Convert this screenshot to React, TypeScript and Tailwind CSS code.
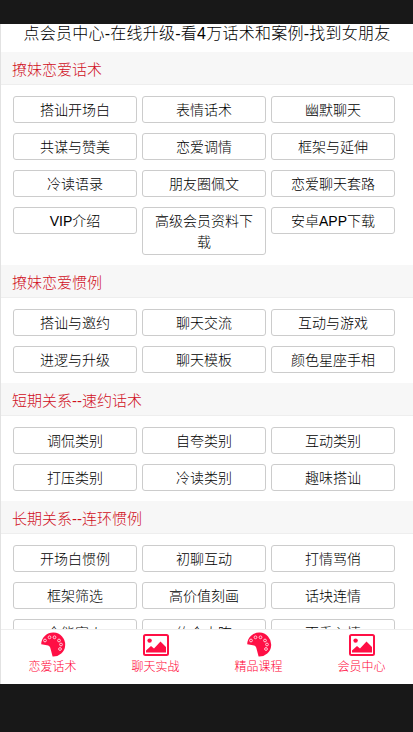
const CJK = "font-['Liberation_Sans','Noto_Sans_CJK_SC',sans-serif]";

const sections = [
  {
    title: "撩妹恋爱话术",
    items: ["搭讪开场白", "表情话术", "幽默聊天", "共谋与赞美", "恋爱调情", "框架与延伸", "冷读语录", "朋友圈佩文", "恋爱聊天套路", "VIP介绍", "高级会员资料下载", "安卓APP下载"],
  },
  {
    title: "撩妹恋爱惯例",
    items: ["搭讪与邀约", "聊天交流", "互动与游戏", "进逻与升级", "聊天模板", "颜色星座手相"],
  },
  {
    title: "短期关系--速约话术",
    items: ["调侃类别", "自夸类别", "互动类别", "打压类别", "冷读类别", "趣味搭讪"],
  },
  {
    title: "长期关系--连环惯例",
    items: ["开场白惯例", "初聊互动", "打情骂俏", "框架筛选", "高价值刻画", "话块连情", "全能家人", "约会大陈", "更重入情"],
  },
];

function PaletteIcon() {
  return (
    <svg width="26" height="26" viewBox="0 0 26 26" aria-hidden="true">
      <path d="M1.2 12.2A12 12 0 1 1 12.6 24.6L10.2 15.6C9.8 14 8.6 13.4 7 13.2z" fill="#ff0f45" />
      <g fill="#ff0f45" stroke="#ffdbe3" strokeWidth="0.9">
        <circle cx="5" cy="8.5" r="1.4" />
        <circle cx="9.5" cy="5.3" r="1.4" />
        <circle cx="14.5" cy="5.3" r="1.4" />
        <circle cx="19" cy="8.5" r="1.4" />
        <circle cx="21" cy="12.5" r="1.4" />
        <circle cx="20" cy="17" r="1.4" />
      </g>
    </svg>
  );
}

function ImageIcon() {
  return (
    <svg width="26" height="22" viewBox="0 0 26 22" aria-hidden="true">
      <rect x="1" y="1" width="24" height="20" rx="1.5" fill="#fff" stroke="#ff0f45" strokeWidth="2" />
      <circle cx="6.6" cy="6.6" r="2.2" fill="#ff0f45" />
      <path d="M3 18.6v-2.2l5-4.4 3 2.4 6.5-7 5.5 5.6v5.6z" fill="#ff0f45" />
    </svg>
  );
}

const tabs = [
  { label: "恋爱话术", icon: <PaletteIcon /> },
  { label: "聊天实战", icon: <ImageIcon /> },
  { label: "精品课程", icon: <PaletteIcon /> },
  { label: "会员中心", icon: <ImageIcon /> },
];

export default function App() {
  return (
    <div className={`flex h-[732px] w-[413px] flex-col overflow-hidden bg-[#181818] font-light ${CJK}`}>
      <div className="h-6 shrink-0" />

      <div className="flex h-[660px] shrink-0 flex-col border-l border-[#e2e2e2] bg-white">
        <div className="h-[605px] shrink-0 overflow-hidden">
          <div className="h-7 text-center text-[16px] leading-[20px] tracking-[0.25px] text-black">点会员中心-在线升级-看4万话术和案例-找到女朋友</div>

          {sections.map((section) => (
            <div key={section.title}>
              <div className="h-[33px] border-b border-[#eeeeee] bg-[#f7f7f7] pl-[11px] text-[15px] leading-[35px] text-[#d00f1c]">
                {section.title}
              </div>
              <div className="grid grid-cols-[124px_124px_124px] items-start gap-x-[5px] gap-y-[10px] pt-[11px] pb-[10px] pl-3">
                {section.items.map((item) => (
                  <div
                    key={item}
                    className="rounded-[3px] border border-[#cccccc] px-2 pt-[3px] pb-[1px] text-center text-[14px] leading-[21px] text-black"
                  >
                    {item}
                  </div>
                ))}
              </div>
            </div>
          ))}
        </div>

        <div className="grid h-[55px] shrink-0 grid-cols-4 border-t border-[#eeeeee] bg-white">
          {tabs.map((tab) => (
            <div key={tab.label} className="flex flex-col items-center">
              <div className="flex h-[27px] items-center pt-[2px]">{tab.icon}</div>
              <div className="pt-px text-[12px] leading-[18px] text-[#ff0033]">{tab.label}</div>
            </div>
          ))}
        </div>
      </div>
    </div>
  );
}
